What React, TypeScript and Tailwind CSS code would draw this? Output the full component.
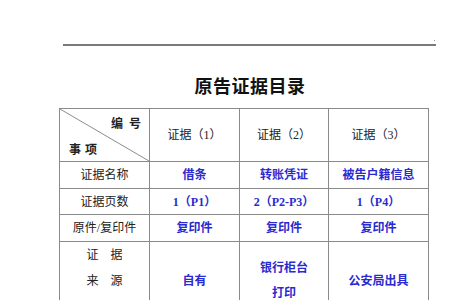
import React from "react";

const ff = { fontFamily: '"Liberation Serif", "Noto Sans CJK SC", serif' };

export default function App() {
  const cell = "border border-[#8a8a8a] text-center align-middle p-0";
  const blue = "text-[#2a2ad0] font-bold";
  return (
    <div className="w-[450px] h-[300px] bg-white overflow-hidden relative" style={ff}>
      <div className="pt-[44px] pl-[63px]">
        <div className="relative w-[373px] h-[2px] bg-[#7a7a7a]">
          <span className="absolute right-[1px] -top-[4px] w-[1px] h-[1px] bg-[#999]" />
        </div>
      </div>
      <div className="pt-[28px] flex justify-center pl-[50px]">
        <h1 className="text-[18px] leading-[22px] font-bold text-[#111] tracking-[0.5px]" style={{ fontFamily: '"Noto Sans CJK SC", sans-serif' }}>
          原告证据目录
        </h1>
      </div>
      <div className="pt-[12px] pl-[59px]">
        <table className="border-collapse table-fixed text-[12px] text-[#222]" style={{ width: 369 }}>
          <colgroup>
            <col style={{ width: 90 }} />
            <col style={{ width: 90 }} />
            <col style={{ width: 89 }} />
            <col style={{ width: 100 }} />
          </colgroup>
          <tbody>
            <tr className="h-[53px]">
              <td className={cell + " relative"}>
                <svg className="absolute inset-0 w-full h-full" viewBox="0 0 90 53" preserveAspectRatio="none">
                  <line x1="0" y1="0" x2="90" y2="53" stroke="#8a8a8a" strokeWidth="1" />
                </svg>
                <div className="relative h-[52px] font-bold">
                  <span className="absolute left-[51px] top-[6px] tracking-[6px]">编号</span>
                  <span className="absolute left-[9px] top-[32px] tracking-[4px]">事项</span>
                </div>
              </td>
              <td className={cell}>证据（1）</td>
              <td className={cell}>证据（2）</td>
              <td className={cell}>证据（3）</td>
            </tr>
            <tr className="h-[27px]">
              <td className={cell}>证据名称</td>
              <td className={cell + " " + blue}>借条</td>
              <td className={cell + " " + blue}>转账凭证</td>
              <td className={cell + " " + blue}>被告户籍信息</td>
            </tr>
            <tr className="h-[26px]">
              <td className={cell}>证据页数</td>
              <td className={cell + " " + blue}>1（P1）</td>
              <td className={cell + " " + blue}>2（P2-P3）</td>
              <td className={cell + " " + blue}>1（P4）</td>
            </tr>
            <tr className="h-[27px]">
              <td className={cell}>原件/复印件</td>
              <td className={cell + " " + blue}>复印件</td>
              <td className={cell + " " + blue}>复印件</td>
              <td className={cell + " " + blue}>复印件</td>
            </tr>
            <tr className="h-[79px]">
              <td className={cell + " leading-[26px]"}>
                <div className="tracking-[12px] pl-[12px]">证据</div>
                <div className="tracking-[12px] pl-[12px]">来源</div>
                <div className="tracking-[12px] pl-[12px]">类型</div>
              </td>
              <td className={cell + " " + blue}>自有</td>
              <td className={cell + " " + blue + " leading-[25px]"}>
                <div>银行柜台</div>
                <div>打印</div>
              </td>
              <td className={cell + " " + blue}>公安局出具</td>
            </tr>
          </tbody>
        </table>
      </div>
    </div>
  );
}
